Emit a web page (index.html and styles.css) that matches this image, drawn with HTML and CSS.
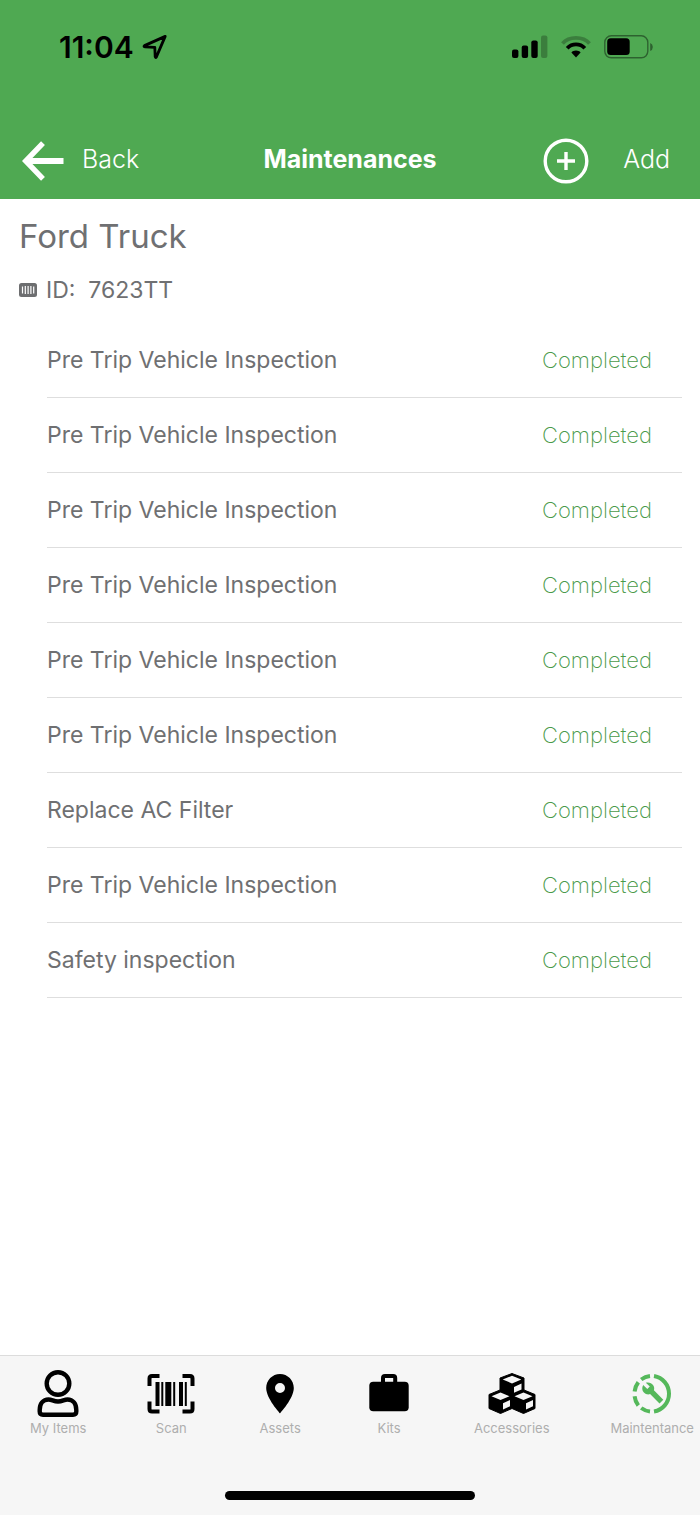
FILE: index.html
```html
<!DOCTYPE html>
<html lang="en">

<head>
    <meta charset="UTF-8">
    <meta name="viewport" content="width=device-width, initial-scale=1.0">
    <title>Maintenances</title>
    <link rel="stylesheet" href="styles.css">
</head>

<body>
    <header>
        <div class="status-bar">
            <div class="status-group">
                <span class="time">11:04</span>
                <svg width="26" height="26" viewBox="0 0 26 26" fill="none" stroke="#000" stroke-width="2.8" stroke-linejoin="round">
                    <path d="M23.2 2.4 L2.5 11.6 Q1.3 12.5 3 12.8 L12.8 13.3 L13.2 22.8 Q13.5 24.2 14.4 22.9 Z"/>
                </svg>
            </div>
            <div class="status-group">
                <svg width="36" height="24" viewBox="0 0 36 24">
                    <rect x="0" y="14.5" width="6.4" height="8.5" rx="2"/>
                    <rect x="9.7" y="10.5" width="6.4" height="12.5" rx="2"/>
                    <rect x="19.3" y="5.5" width="6.4" height="17.5" rx="2"/>
                    <rect x="29" y=".5" width="6.4" height="22.5" rx="2" opacity=".25"/>
                </svg>
                <svg width="30" height="24" viewBox="0 0 30 24" fill="none" stroke="#000" stroke-width="3.8">
                    <path d="M1.5 8.5 C8 1 22 1 28.5 8.5" opacity=".25"/>
                    <path d="M6.2 13.2 C11 8.1 19 8.1 23.8 13.2"/>
                    <path d="M15 15.5 C17 15.5 18.5 16.2 19.6 17.4 L15 22.5 L10.4 17.4 C11.5 16.2 13 15.5 15 15.5 Z" fill="#000" stroke="none"/>
                </svg>
                <svg width="49" height="24" viewBox="0 0 49 24">
                    <rect x=".8" y=".8" width="43" height="22" rx="6.5" fill="none" stroke="#000" stroke-width="1.4" opacity=".42"/>
                    <rect x="3.2" y="3.2" width="22.5" height="16.8" rx="3.5"/>
                    <path d="M46.2 8 Q48.8 9 48.8 12 Q48.8 15 46.2 16 Z" opacity=".42"/>
                </svg>
            </div>
        </div>
        <div class="nav-bar">
            <button class="nav-button back-button">
                <svg width="42" height="40" viewBox="0 0 42 40" fill="none" stroke="#fff">
                    <path d="M21 2.2 L3.7 20 L21 37.8" stroke-width="5.4"/>
                    <path d="M4 20 H41.5" stroke-width="6"/>
                </svg>
                <span>Back</span>
            </button>
            <h1>Maintenances</h1>
            <button class="nav-button add-button">
                <svg width="46" height="46" viewBox="0 0 46 46" fill="none" stroke="#fff" stroke-width="3.4">
                    <circle cx="23" cy="23" r="20.8"/>
                    <path d="M23 14 V32 M14 23 H32"/>
                </svg>
                <span>Add</span>
            </button>
        </div>
    </header>

    <main>
        <h2>Ford Truck</h2>
        <p class="asset-id">
            <svg width="18" height="14" viewBox="0 0 18 14">
                <rect width="18" height="14" rx="2.5" fill="#6d6e70"/>
                <path d="M3.5 3.5 V10.5 M6.3 3 V11 M9.1 3 V11 M11.9 3 V11 M14.7 3.5 V10.5" stroke="#fff" stroke-width="1.2"/>
            </svg>
            <span>ID:&nbsp; 7623TT</span>
        </p>
        <ul class="maintenance-list">
            <li><span>Pre Trip Vehicle Inspection</span><span class="status">Completed</span></li>
            <li><span>Pre Trip Vehicle Inspection</span><span class="status">Completed</span></li>
            <li><span>Pre Trip Vehicle Inspection</span><span class="status">Completed</span></li>
            <li><span>Pre Trip Vehicle Inspection</span><span class="status">Completed</span></li>
            <li><span>Pre Trip Vehicle Inspection</span><span class="status">Completed</span></li>
            <li><span>Pre Trip Vehicle Inspection</span><span class="status">Completed</span></li>
            <li><span>Replace AC Filter</span><span class="status">Completed</span></li>
            <li><span>Pre Trip Vehicle Inspection</span><span class="status">Completed</span></li>
            <li><span>Safety inspection</span><span class="status">Completed</span></li>
        </ul>
    </main>

    <footer>
        <nav class="tab-bar">
            <a href="#items">
                <svg width="48" height="48" viewBox="0 0 48 48" fill="none" stroke="#000" stroke-width="4.4">
                    <circle cx="24" cy="13.5" r="11.3"/>
                    <path d="M14.5 29.5 C18 29.5 19.5 31.5 24 31.5 C28.5 31.5 30 29.5 33.5 29.5 C39 29.5 42.3 34 42.3 40 V41.5 Q42.3 44.7 39 44.7 H9 Q5.7 44.7 5.7 41.5 V40 C5.7 34 9 29.5 14.5 29.5 Z"/>
                </svg>
                <span>My Items</span>
            </a>
            <a href="#scan">
                <svg width="48" height="48" viewBox="0 0 48 48">
                    <path d="M2.5 16 V8.5 Q2.5 6 5 6 H12.5 M35.5 6 H43 Q45.5 6 45.5 8.5 V16 M45.5 31.5 V39 Q45.5 41.5 43 41.5 H35.5 M12.5 41.5 H5 Q2.5 41.5 2.5 39 V31.5" fill="none" stroke="#000" stroke-width="4"/>
                    <path d="M8.5 12 h4 v24 h-4 Z M14.3 12 h2 v24 h-2 Z M18.3 12 h6 v24 h-6 Z M26.2 12 h2 v24 h-2 Z M32 12 h4 v24 h-4 Z M37.8 12 h2 v24 h-2 Z"/>
                </svg>
                <span>Scan</span>
            </a>
            <a href="#assets">
                <svg width="48" height="48" viewBox="0 0 48 48">
                    <path fill-rule="evenodd" d="M24 4 C16.3 4 10.2 10.3 10.2 18 C10.2 28.5 24 43.3 24 43.3 C24 43.3 37.8 28.5 37.8 18 C37.8 10.3 31.7 4 24 4 Z M24 13 a5 5 0 1 1 0 10 a5 5 0 1 1 0 -10 Z"/>
                </svg>
                <span>Assets</span>
            </a>
            <a href="#kits">
                <svg width="48" height="48" viewBox="0 0 48 48">
                    <rect x="4.3" y="11.8" width="39.4" height="29.5" rx="4"/>
                    <path d="M18 14 V8 Q18 6 20 6 H28.2 Q30.2 6 30.2 8 V14" fill="none" stroke="#000" stroke-width="4"/>
                </svg>
                <span>Kits</span>
            </a>
            <a href="#accessories">
                <svg width="48" height="48" viewBox="0 0 48 48">
                    <path d="M24 3.5 L36 8 V20 L47 24.5 V38.5 L35.5 43.5 L24 38.5 L12.5 43.5 L1 38.5 V24.5 L12 20 V8 Z" stroke="#000" stroke-linejoin="round"/>
                    <path fill="#f6f6f6" d="M24 5.8 L33.3 9.5 L24 13.4 L14.7 9.5 Z M26 17 L33.5 13.5 V19.5 L26 22.8 Z M12.5 22.5 L21.5 26.2 L12.5 30 L3.5 26.2 Z M35.5 22.5 L44.5 26.2 L35.5 30 L26.5 26.2 Z M15 33.2 L22 30 V36.3 L15 39.5 Z M38 33.2 L45 30 V36.3 L38 39.5 Z"/>
                </svg>
                <span>Accessories</span>
            </a>
            <a href="#maintenance">
                <svg width="48" height="48" viewBox="0 0 48 48">
                    <path d="M26 6 A18 18 0 0 1 26 41.5 M22 41.5 A18 18 0 0 1 13.2 38 M10.3 35.4 A18 18 0 0 1 6.6 26.2 M6.6 21.5 A18 18 0 0 1 10.3 12.3 M13.2 9.5 A18 18 0 0 1 22 6" fill="none" stroke="#55b85b" stroke-width="4"/>
                    <path fill="#55b85b" d="M15.2 15 L19.3 19.1 L21.8 16.6 L17.8 12.7 C21 11.8 23.5 13 25 15 C26.3 16.8 26.5 18.5 25.9 20.3 L35.3 29.7 L31.5 33.5 L22.1 24.1 C19.9 24.9 17.5 24.2 15.9 22.5 C14 20.5 13.7 17.8 15.2 15 Z"/>
                </svg>
                <span>Maintentance</span>
            </a>
        </nav>
        <div class="home-indicator"></div>
    </footer>
</body>

</html>
```

FILE: styles.css
```css
body {
    font-family: Inter, "Liberation Sans", sans-serif;
    margin: 0;
    min-height: 100vh;
    display: flex;
    flex-direction: column;
    background-color: #fff;
    color: #6f7072;
}

header {
    background-color: #4fa952;
    color: #fff;
    padding: 31px 0 15px;
}

h1,
h2,
p {
    margin: 0;
}

svg {
    display: block;
    flex-shrink: 0;
}

.status-bar {
    display: flex;
    justify-content: space-between;
    align-items: center;
    height: 32px;
    padding: 0 47px 0 59px;
    color: #000;
}

.status-group {
    display: flex;
    align-items: center;
    gap: 13px;
}

.status-group:first-child {
    gap: 8px;
}

.time {
    font-size: 30px;
    font-weight: 600;
}

.nav-bar {
    display: grid;
    grid-template-columns: 1fr auto 1fr;
    align-items: center;
    margin-top: 75px;
    padding: 0 22px;
}

.nav-bar h1 {
    font-size: 25px;
    font-weight: 700;
    line-height: 30px;
    padding-bottom: 4px;
}

.nav-button {
    display: flex;
    align-items: center;
    border: none;
    background: none;
    padding: 0;
    color: #fff;
    font-family: inherit;
    font-size: 25px;
    font-weight: 300;
    cursor: pointer;
}

.nav-button span {
    line-height: 30px;
    padding-bottom: 4px;
}

.back-button {
    gap: 18px;
}

.add-button {
    gap: 34px;
    justify-self: end;
    margin-right: 8px;
}

main {
    flex: 1;
    padding: 15px 18px 0 19px;
}

h2 {
    font-size: 33px;
    font-weight: 400;
    line-height: 44px;
}

.asset-id {
    display: flex;
    align-items: center;
    gap: 9px;
    margin-top: 17px;
    font-size: 23px;
    line-height: 30px;
}

.maintenance-list {
    list-style-type: none;
    margin: 18px 0 0 28px;
    padding: 0;
}

.maintenance-list li {
    display: flex;
    justify-content: space-between;
    padding: 22px 30px 22px 0;
    border-bottom: 1px solid #dedede;
    font-size: 23px;
    line-height: 30px;
}

.maintenance-list .status {
    color: #4a9a4a;
    font-size: 22px;
    font-weight: 200;
}

footer {
    background-color: #f6f6f6;
    border-top: 1px solid #dcdcdc;
    padding: 14px 0 15px;
}

.tab-bar {
    display: flex;
    justify-content: space-between;
    padding: 0 6px 0 30px;
}

.tab-bar a {
    display: flex;
    flex-direction: column;
    align-items: center;
    color: #aeaeae;
    font-size: 13px;
    line-height: 20px;
    text-decoration: none;
}

.home-indicator {
    width: 250px;
    height: 9px;
    margin: 53px auto 0;
    border-radius: 5px;
    background-color: #000;
}
```
